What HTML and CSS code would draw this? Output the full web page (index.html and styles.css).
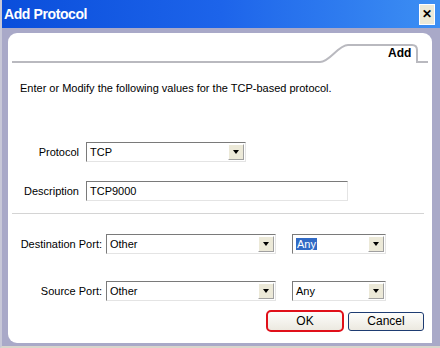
FILE: index.html
```html
<!DOCTYPE html>
<html lang="en">
<head>
<meta charset="UTF-8">
<title>Add Protocol</title>
<link rel="stylesheet" href="styles.css">
</head>
<body>

<div class="window">
    <div class="titlebar">
        <span class="title">Add Protocol</span>
        <span class="close">&#10005;</span>
    </div>

    <div class="panel">
        <div class="tabhead">
            <svg width="424" height="30" viewBox="0 0 424 30">
                <path d="M4 29 H312 C322 29 330 12 340 12 H404 Q409 12 409 17 V29 H420" fill="none" stroke="#b9b9bf" stroke-width="2"/>
            </svg>
            <span class="tablabel">Add</span>
        </div>

        <p class="intro">Enter or Modify the following values for the TCP-based protocol.</p>

        <div class="row row-protocol">
            <label class="lbl">Protocol</label>
            <div class="combo w-protocol"><span class="val">TCP</span><span class="arrow"></span></div>
        </div>

        <div class="row row-desc">
            <label class="lbl">Description</label>
            <div class="textbox">TCP9000</div>
        </div>

        <div class="sep"></div>

        <div class="row row-dest">
            <label class="lbl lbl-port">Destination Port:</label>
            <div class="combo w-port"><span class="val">Other</span><span class="arrow"></span></div>
            <div class="combo w-any"><span class="val"><span class="sel">Any</span></span><span class="arrow"></span></div>
        </div>

        <div class="row row-src">
            <label class="lbl lbl-port">Source Port:</label>
            <div class="combo w-port"><span class="val">Other</span><span class="arrow"></span></div>
            <div class="combo w-any"><span class="val">Any</span><span class="arrow"></span></div>
        </div>

        <div class="buttons">
            <button class="btn btn-ok">OK</button>
            <button class="btn btn-cancel">Cancel</button>
        </div>
    </div>
</div>

</body>
</html>
```

FILE: styles.css
```css
    body {
        margin: 0;
        padding: 0;
        font-family: "Liberation Sans", Arial, sans-serif;
        font-size: 11px;
        color: #000;
        background-color: #d4d0c8;
    }
    .window {
        width: 440px;
        height: 348px;
        background-color: #a9a9c8;
        box-sizing: border-box;
        border-left: 2px solid #c8c8d8;
        border-bottom: 2px solid #d8d6cc;
        overflow: hidden;
    }
    .titlebar {
        height: 28px;
        display: flex;
        align-items: center;
        justify-content: space-between;
        padding: 0 5px 0 2px;
        background: linear-gradient(to right, #0a4edb 0%, #1d64ea 50%, #3d8ff3 100%);
    }
    .title {
        color: #fff;
        font-weight: bold;
        font-size: 14px;
        letter-spacing: -0.4px;
    }
    .close {
        width: 14px;
        height: 19px;
        display: flex;
        align-items: center;
        justify-content: center;
        background-color: #ece9d8;
        border: 1px solid #fff;
        font-size: 12px;
        font-weight: bold;
        color: #000;
    }
    .panel {
        margin: 5px 8px 0 6px;
        height: 310px;
        background-color: #fff;
        border-radius: 9px 9px 0 9px;
    }
    .tabhead {
        position: relative;
        height: 30px;
    }
    .tabhead svg {
        display: block;
    }
    .tablabel {
        position: absolute;
        left: 380px;
        top: 13px;
        font-weight: bold;
        font-size: 12px;
    }
    .intro {
        margin: 18px 0 0 12px;
        line-height: 14px;
    }
    .row {
        display: flex;
        align-items: center;
        height: 21px;
    }
    .row-protocol {
        margin-top: 46px;
    }
    .row-desc {
        margin-top: 18px;
    }
    .row-dest {
        margin-top: 19px;
    }
    .row-src {
        margin-top: 26px;
    }
    .lbl {
        width: 71px;
        text-align: right;
        margin-right: 7px;
    }
    .lbl-port {
        width: 94px;
        margin-right: 4px;
    }
    .combo {
        height: 20px;
        box-sizing: border-box;
        display: flex;
        align-items: center;
        justify-content: space-between;
        border: 1px solid #e4e4e4;
        border-top-color: #7a7a7a;
        border-left-color: #7a7a7a;
        padding: 0 1px 0 3px;
        margin-right: 16px;
    }
    .w-protocol {
        width: 160px;
    }
    .w-port {
        width: 170px;
    }
    .w-any {
        width: 94px;
    }
    .val {
        line-height: 16px;
    }
    .sel {
        background-color: #316ac5;
        color: #fff;
        padding: 0 1px;
    }
    .arrow {
        width: 16px;
        height: 16px;
        box-sizing: border-box;
        background-color: #ece9d8;
        border: 1px solid #fff;
        border-right-color: #a0a0a0;
        border-bottom-color: #a0a0a0;
        position: relative;
    }
    .arrow::after {
        content: "";
        position: absolute;
        left: 4px;
        top: 5px;
        border-left: 3px solid transparent;
        border-right: 3px solid transparent;
        border-top: 4px solid #000;
    }
    .textbox {
        width: 262px;
        height: 20px;
        box-sizing: border-box;
        border: 1px solid #e4e4e4;
        border-top-color: #7a7a7a;
        border-left-color: #7a7a7a;
        padding: 0 3px;
        line-height: 18px;
    }
    .sep {
        margin: 12px 8px 0 4px;
        height: 1px;
        background-color: #d4d4d4;
    }
    .buttons {
        display: flex;
        justify-content: flex-end;
        align-items: center;
        gap: 4px;
        margin: 9px 8px 0 0;
    }
    .btn {
        font-family: "Liberation Sans", Arial, sans-serif;
        font-size: 12px;
        height: 19px;
        width: 76px;
        background: linear-gradient(#fdfdfb, #ece9e0);
        border: 1px solid #1e3c72;
        border-radius: 3px;
        padding: 0;
        color: #000;
    }
    .btn-ok {
        width: 78px;
        height: 22px;
        border: 2px solid #e0101a;
        border-radius: 5px;
    }
```
